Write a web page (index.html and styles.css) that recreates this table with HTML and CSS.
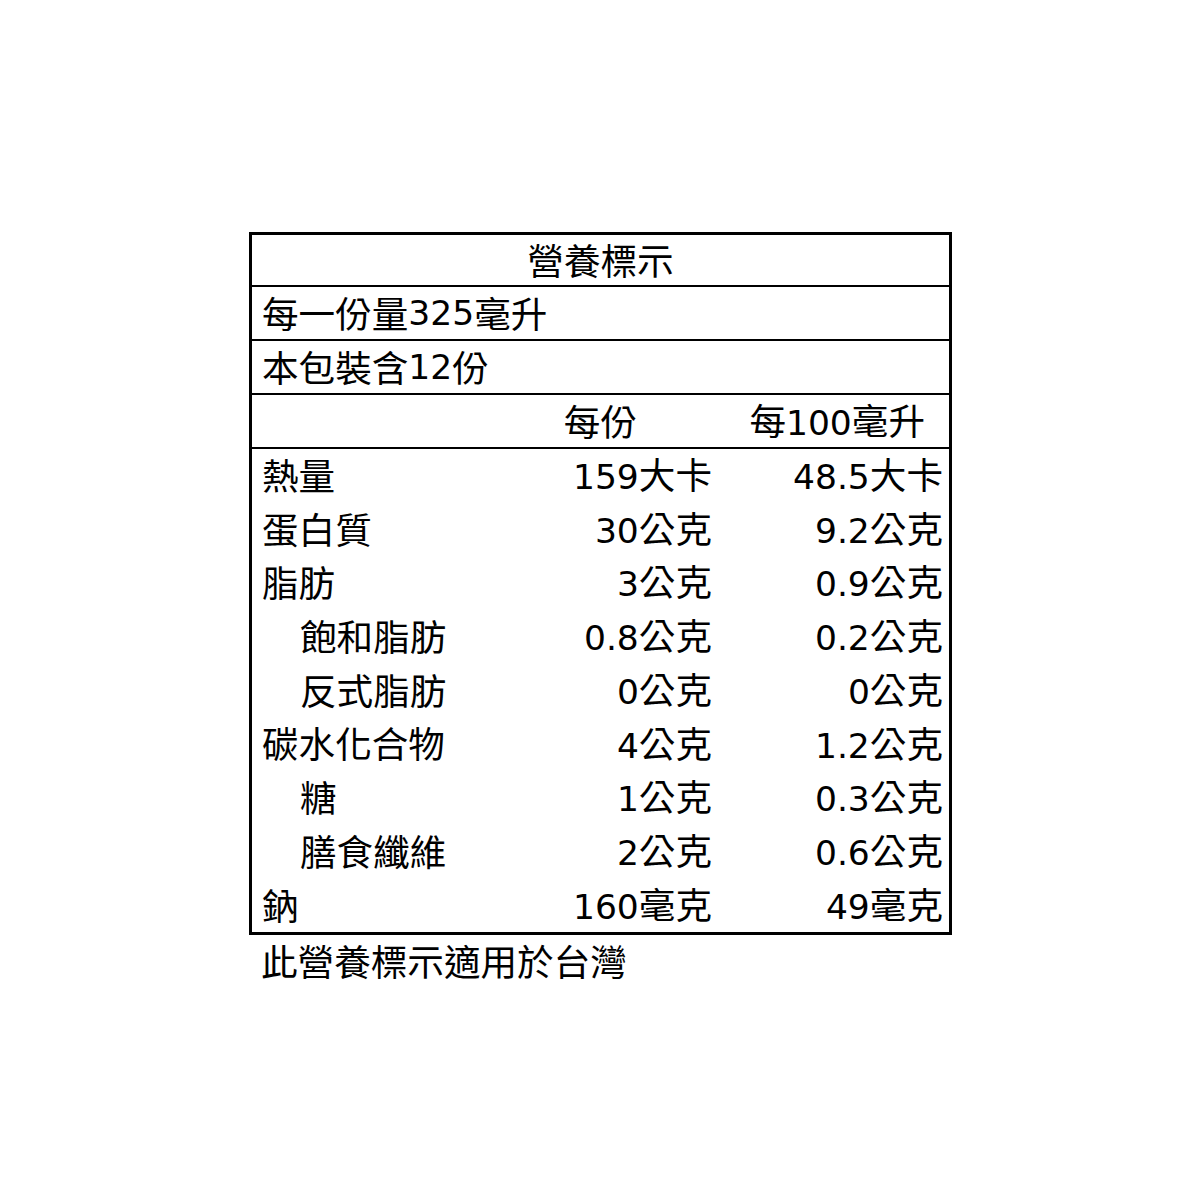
FILE: index.html
```html
<!DOCTYPE html>
<html lang="zh-Hant">
<head>
<meta charset="utf-8">
<title>營養標示</title>
<link rel="stylesheet" href="styles.css">
</head>
<body>
<div class="page">
  <div class="label">
    <div class="row title">營養標示</div>
    <div class="row line">每一份量<span class="n">325</span>毫升</div>
    <div class="row line">本包裝含<span class="n">12</span>份</div>
    <div class="row head">
      <span></span><span class="h2">每份</span><span class="h3">每<span class="n">100</span>毫升</span>
    </div>
    <div class="data">
      <div class="drow"><span>熱量</span><span class="v"><span class="n">159</span>大卡</span><span class="v"><span class="n">48.5</span>大卡</span></div>
      <div class="drow"><span>蛋白質</span><span class="v"><span class="n">30</span>公克</span><span class="v"><span class="n">9.2</span>公克</span></div>
      <div class="drow"><span>脂肪</span><span class="v"><span class="n">3</span>公克</span><span class="v"><span class="n">0.9</span>公克</span></div>
      <div class="drow"><span class="sub">飽和脂肪</span><span class="v"><span class="n">0.8</span>公克</span><span class="v"><span class="n">0.2</span>公克</span></div>
      <div class="drow"><span class="sub">反式脂肪</span><span class="v"><span class="n">0</span>公克</span><span class="v"><span class="n">0</span>公克</span></div>
      <div class="drow"><span>碳水化合物</span><span class="v"><span class="n">4</span>公克</span><span class="v"><span class="n">1.2</span>公克</span></div>
      <div class="drow"><span class="sub">糖</span><span class="v"><span class="n">1</span>公克</span><span class="v"><span class="n">0.3</span>公克</span></div>
      <div class="drow"><span class="sub">膳食纖維</span><span class="v"><span class="n">2</span>公克</span><span class="v"><span class="n">0.6</span>公克</span></div>
      <div class="drow"><span>鈉</span><span class="v"><span class="n">160</span>毫克</span><span class="v"><span class="n">49</span>毫克</span></div>
    </div>
  </div>
  <div class="note">此營養標示適用於台灣</div>
</div>
</body>
</html>
```
FILE: styles.css
```css
html, body {
  margin: 0;
  padding: 0;
  background: #fff;
}
body {
  font-family: "Noto Sans CJK TC", "Noto Sans", sans-serif;
  color: #000;
  font-size: 36.6px;
  line-height: 1;
}
.n {
  font-family: "DejaVu Sans", "Noto Sans", sans-serif;
  font-size: 34.5px;
}
.page {
  padding: 232px 0 0 249px;
}
.label {
  width: 697px;
  border: 3px solid #000;
}
.row {
  height: 52px;
  border-bottom: 2px solid #000;
  display: flex;
  align-items: center;
  padding-left: 10px;
}
.title {
  height: 50px;
  justify-content: center;
  padding-left: 0;
}
.head {
  display: grid;
  grid-template-columns: 248px 212px 237px;
  padding-left: 0;
}
.h2 {
  text-align: right;
  padding-right: 75px;
}
.h3 {
  text-align: right;
  padding-right: 24px;
}
.drow {
  height: 52.7px;
  padding-bottom: 1px;
  display: grid;
  grid-template-columns: 248px 212px 237px;
  align-items: center;
}
.drow > span:first-child {
  padding-left: 10px;
}
.drow > span.sub {
  padding-left: 48px;
}
.v {
  text-align: right;
}
.drow .v:last-child {
  padding-right: 6px;
}
.note {
  padding: 0 0 0 12px;
  height: 52px;
  display: flex;
  align-items: center;
}
```
